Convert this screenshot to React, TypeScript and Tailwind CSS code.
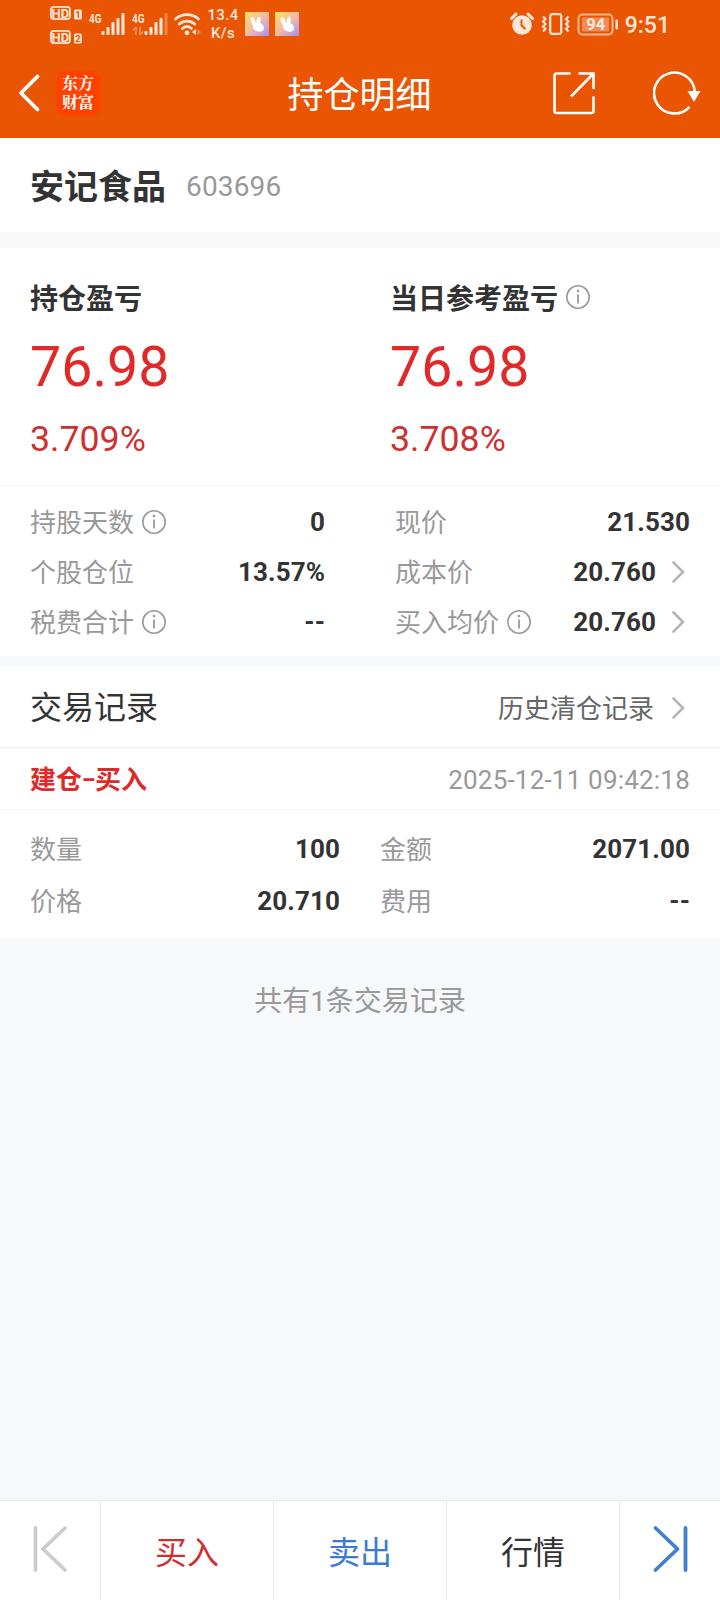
import { useState } from "react";
import clsx from "clsx";

type Metric = {
  label: string;
  value: string;
  info?: boolean;
  link?: boolean;
};

const profits = [
  { label: "持仓盈亏", amount: "76.98", percent: "3.709%" },
  { label: "当日参考盈亏", amount: "76.98", percent: "3.708%", info: true },
];

const leftMetrics: Metric[] = [
  { label: "持股天数", value: "0", info: true },
  { label: "个股仓位", value: "13.57%" },
  { label: "税费合计", value: "--", info: true },
];

const rightMetrics: Metric[] = [
  { label: "现价", value: "21.530" },
  { label: "成本价", value: "20.760", link: true },
  { label: "买入均价", value: "20.760", info: true, link: true },
];

const recordRows = [
  [
    { label: "数量", value: "100" },
    { label: "金额", value: "2071.00" },
  ],
  [
    { label: "价格", value: "20.710" },
    { label: "费用", value: "--" },
  ],
];

const InfoIcon = ({ className }: { className?: string }) => (
  <svg className={clsx("shrink-0", className)} width="24" height="24" viewBox="0 0 24 24" fill="none">
    <circle cx="12" cy="12" r="11.2" stroke="#999" strokeWidth="1.6" />
    <path d="M12 9.5v9" stroke="#999" strokeWidth="1.8" />
    <circle cx="12" cy="6" r="1.3" fill="#999" />
  </svg>
);

const Chevron = ({ className }: { className?: string }) => (
  <svg className={clsx("mr-[5px] shrink-0", className)} width="13" height="22" viewBox="0 0 13 22" fill="none">
    <path d="M1.5 1.5 11 11l-9.5 9.5" stroke="#b5b5b5" strokeWidth="2.6" strokeLinecap="round" />
  </svg>
);

const HdBadge = ({ sim }: { sim: string }) => (
  <svg width="32" height="14" viewBox="0 0 32 14">
    <rect x="0.9" y="0.9" width="19" height="12.2" rx="2.8" fill="none" stroke="#ffe6d8" strokeWidth="1.8" />
    <text x="10.4" y="11.6" textAnchor="middle" fontSize="13" fontWeight="700" fill="#ffe6d8">HD</text>
    <rect x="24" y="3.5" width="7.8" height="10" rx="1.5" fill="#ffe6d8" />
    <text x="27.9" y="12" textAnchor="middle" fontSize="9.5" fontWeight="700" fill="#e95502">{sim}</text>
  </svg>
);

const Signal = ({ weak }: { weak?: boolean }) => (
  <svg width="38" height="32" viewBox="0 -4 38 32" fill="#ffe6d8">
    <text x="0" y="10.5" fontSize="13.5" fontWeight="700" textLength="12.5" lengthAdjust="spacingAndGlyphs">4G</text>
    {weak && (
      <path d="M4 15v8M4 15l-3 3.5M8 23v-8M8 23l3-3.5" stroke="#ffe6d8" strokeWidth="1.8" fill="none" opacity="0.4" />
    )}
    <rect x="12.5" y="19" width="3" height="4" rx="1" />
    <rect x="17.5" y="15" width="3" height="8" rx="1" />
    <rect x="22.5" y="10" width="3" height="13" rx="1" />
    <rect x="27.5" y="6" width="3" height="17" rx="1" />
    <rect x="32.5" y="1" width="3" height="22" rx="1" opacity={weak ? 0.35 : 1} />
  </svg>
);

const RabbitTile = () => (
  <div className="size-6 bg-linear-to-br from-[#ffe04a] via-[#f5b9a4] to-[#a58df5]">
    <svg width="24" height="24" viewBox="0 0 24 24" fill="#fff">
      <ellipse cx="8.2" cy="9.5" rx="2.1" ry="4.6" transform="rotate(-20 8.2 9.5)" />
      <ellipse cx="13.6" cy="9" rx="2" ry="4.2" transform="rotate(8 13.6 9)" />
      <ellipse cx="13.5" cy="15.2" rx="5.7" ry="4.4" transform="rotate(20 13.5 15.2)" />
    </svg>
  </div>
);

function StatusBar() {
  return (
    <div className="flex h-12 items-center pl-[50px] text-[#ffe6d8]">
      <div className="mt-0.5 flex flex-col gap-[10px]">
        <HdBadge sim="1" />
        <HdBadge sim="2" />
      </div>
      <div className="ml-[7px] flex gap-[5px]">
        <Signal />
        <Signal weak />
      </div>
      <svg className="ml-[3px]" width="28" height="24" viewBox="0 0 28 24" fill="none">
        <path d="M2.5 7a17.5 17.5 0 0 1 23 0M6.2 12a12 12 0 0 1 15.6 0M9.5 16.5a6.500 6.500 0 0 1 9 0" stroke="#ffe6d8" strokeWidth="2.7" strokeLinecap="round" />
        <circle cx="14" cy="20.8" r="2.4" fill="#ffe6d8" />
        <path d="M23 17v6l-4-3z" fill="#ffe6d8" />
        <path d="M24.5 17v6l3.5-3z" fill="#ffe6d8" opacity="0.4" />
      </svg>
      <div className="ml-[6px] w-[32px] text-center text-[15px] font-medium leading-[18px] tracking-[0.3px]">
        <div>13.4</div>
        <div>K/s</div>
      </div>
      <div className="ml-[6px] flex gap-[6px]">
        <RabbitTile />
        <RabbitTile />
      </div>
      <div className="ml-auto mr-[50px] flex items-center">
        <svg width="24" height="24" viewBox="0 0 24 24">
          <circle cx="12" cy="13" r="9.8" fill="#ffe6d8" />
          <path d="M1.5 6.5 6 2M22.5 6.5 18 2" stroke="#ffe6d8" strokeWidth="3" strokeLinecap="round" />
          <path d="M11.5 7.5v6l4 3.5" fill="none" stroke="#e95502" strokeWidth="2" />
        </svg>
        <svg className="ml-[7px]" width="30" height="24" viewBox="0 0 30 24" fill="none" stroke="#ffe6d8" strokeWidth="2.2">
          <rect x="9.2" y="2.2" width="11" height="19.6" rx="2" />
          <path d="M2 4.5 4.500 7 2 9.500 4.500 12 2 14.500 4.500 17 2 19.500M27.500 4.500 25 7l2.500 2.500L25 12l2.500 2.500L25 17l2.500 2.500" strokeWidth="2" />
        </svg>
        <svg className="ml-[6px]" width="42" height="24" viewBox="0 0 42 24">
          <rect x="1.5" y="2.5" width="34" height="20" rx="4" fill="none" stroke="#ffb792" strokeWidth="2" />
          <rect x="5" y="5.5" width="27" height="14" rx="1" fill="#f28a55" />
          <text x="18.7" y="18.3" textAnchor="middle" fontSize="16.5" fontWeight="700" fill="#ffe9dd">94</text>
          <rect x="38.5" y="7.5" width="2.500" height="10" rx="1" fill="#ffe6d8" />
        </svg>
        <span className="ml-[6px] mt-[3px] text-[23px] font-medium leading-6">9:51</span>
      </div>
    </div>
  );
}

function TitleBar() {
  return (
    <div className="grid h-[90px] grid-cols-[1fr_auto_1fr] items-center pl-[17px] pr-[18px]">
      <div className="flex items-center">
        <svg width="24" height="40" viewBox="0 0 24 40" fill="none">
          <path d="M20.5 3.5 4 20l16.5 16.5" stroke="#fff" strokeWidth="3.8" strokeLinecap="round" strokeLinejoin="round" />
        </svg>
        <div className="ml-[15px] flex size-[45px] items-center justify-center rounded-[10px] bg-[#ff4200]">
          <span className="w-[33px] break-all pb-0.5 font-['Noto_Serif_CJK_SC','Noto_Sans_CJK_SC',serif] text-[16px] font-bold leading-[19px] text-white">
            东方财富
          </span>
        </div>
      </div>
      <h1 className="pt-[5px] text-[36px] leading-[44px] text-white">持仓明细</h1>
      <div className="flex items-center justify-end gap-[57px]">
        <svg width="44" height="44" viewBox="0 0 44 44" fill="none" stroke="#fff" strokeWidth="2.6">
          <path d="M18.5 2.5H4.5a2 2 0 0 0-2 2V40a2 2 0 0 0 2 2h35a2 2 0 0 0 2-2V25.5" />
          <path d="M26.5 2.5h15v15.5M41 3 19 25.5" />
        </svg>
        <svg width="49" height="44" viewBox="0 0 49 44" fill="none">
          <path d="M36.5 35.8A20.4 20.4 0 1 1 41.8 21" stroke="#fff" strokeWidth="2.6" />
          <path d="M34.5 20h13l-6.5 11z" fill="#fff" />
        </svg>
      </div>
    </div>
  );
}

function MetricRow({ label, value, info, link }: Metric) {
  return (
    <div className="flex h-[50px] items-center">
      <span className="pt-px text-[#999]">{label}</span>
      {info && <InfoIcon className="ml-2" />}
      <span className="ml-auto font-bold tracking-[0.1px] text-[#333]">{value}</span>
      {link && <Chevron className="ml-4" />}
    </div>
  );
}

export default function App() {
  const [tab, setTab] = useState("");

  return (
    <div className="flex h-[1600px] w-[720px] flex-col bg-[#f7f8fa] font-[Roboto,'Noto_Sans_CJK_SC',sans-serif] text-[26px] leading-[36px] text-[#333]">
      <header className="h-[138px] bg-[#e95502]">
        <StatusBar />
        <TitleBar />
      </header>

      <section className="flex h-[94px] items-center bg-white px-[30px] pt-1">
        <h2 className="text-[34px] font-bold">安记食品</h2>
        <span className="ml-5 text-[28px] tracking-[0.15px] text-[#999]">603696</span>
      </section>

      {/* Profit summary */}
      <section className="mt-4 bg-white">
        <div className="grid h-[238px] grid-cols-2 border-b border-[#f5f5f5] pt-[31px]">
          {profits.map((item) => (
            <div key={item.label} className="pl-[30px]">
              <div className="flex h-9 items-center text-[28px] font-bold">
                <span className="pt-[5px]">{item.label}</span>
                {item.info && <InfoIcon className="ml-2" />}
              </div>
              <div className="mt-[21px] text-[55.5px] leading-[64px] text-[#e02a2a]">{item.amount}</div>
              <div className="mt-[17px] text-[35.7px] leading-[44px] text-[#cc3030]">{item.percent}</div>
            </div>
          ))}
        </div>
        <div className="grid grid-cols-[295px_295px] justify-between px-[30px] pb-[9px] pt-[11px]">
          <div>
            {leftMetrics.map((m) => (
              <MetricRow key={m.label} {...m} />
            ))}
          </div>
          <div>
            {rightMetrics.map((m) => (
              <MetricRow key={m.label} {...m} />
            ))}
          </div>
        </div>
      </section>

      {/* Trade records */}
      <section className="mt-[10px] bg-white">
        <div className="flex h-[83px] items-center border-b-[3px] border-[#f5f6f7] px-[30px] pt-1">
          <h3 className="text-[32px]">交易记录</h3>
          <button className="ml-auto flex items-center text-[#666]">
            <span className="pt-0.5">历史清仓记录</span>
            <Chevron className="ml-[18px]" />
          </button>
        </div>
        <div className="flex h-[61px] items-center justify-between border-b border-[#f5f5f5] px-[30px] pt-0.5">
          <span className="flex font-bold text-[#dc2b2b]">
            建仓<span className="w-[13px] text-center text-[21px] font-black">–</span>买入
          </span>
          <span className="tracking-[0.2px] text-[#999]">2025-12-11 09:42:18</span>
        </div>
        <div className="px-[30px] pb-[11px] pt-[13px]">
          {recordRows.map((row) => (
            <div key={row[0].label} className="grid h-[52px] grid-cols-[310px_310px] items-center justify-between">
              {row.map((cell) => (
                <div key={cell.label} className="flex justify-between">
                  <span className="pt-px text-[#999]">{cell.label}</span>
                  <span className="font-bold tracking-[0.1px]">{cell.value}</span>
                </div>
              ))}
            </div>
          ))}
        </div>
      </section>

      <p className="mt-[46px] text-center text-[28px] text-[#999]">共有1条交易记录</p>

      <footer className="mt-auto grid h-[100px] grid-cols-[101px_173px_173px_173px_100px] divide-x divide-[#ebebeb] border-t border-[#e9ebed] bg-white text-[32px]">
        <button className="flex items-center justify-center pb-[3px]">
          <svg width="36" height="48" viewBox="0 0 36 48" fill="none" stroke="#ccc" strokeWidth="3.8" strokeLinecap="round" strokeLinejoin="round">
            <path d="M3.5 3v42M33 3 11 24l22 21" />
          </svg>
        </button>
        <button className="pt-1 text-[#d22d2d]" onClick={() => setTab("buy")}>买入</button>
        <button className="pt-1 text-[#3a7bd0]" onClick={() => setTab("sell")}>卖出</button>
        <button className={clsx("pt-1", tab === "quote" && "font-bold")} onClick={() => setTab("quote")}>行情</button>
        <button className="flex items-center justify-center pb-[3px]">
          <svg width="36" height="48" viewBox="0 0 36 48" fill="none" stroke="#4080cc" strokeWidth="3.8" strokeLinecap="round" strokeLinejoin="round">
            <path d="M33.5 3v42M3.5 3l22 21-22 21" />
          </svg>
        </button>
      </footer>
    </div>
  );
}
